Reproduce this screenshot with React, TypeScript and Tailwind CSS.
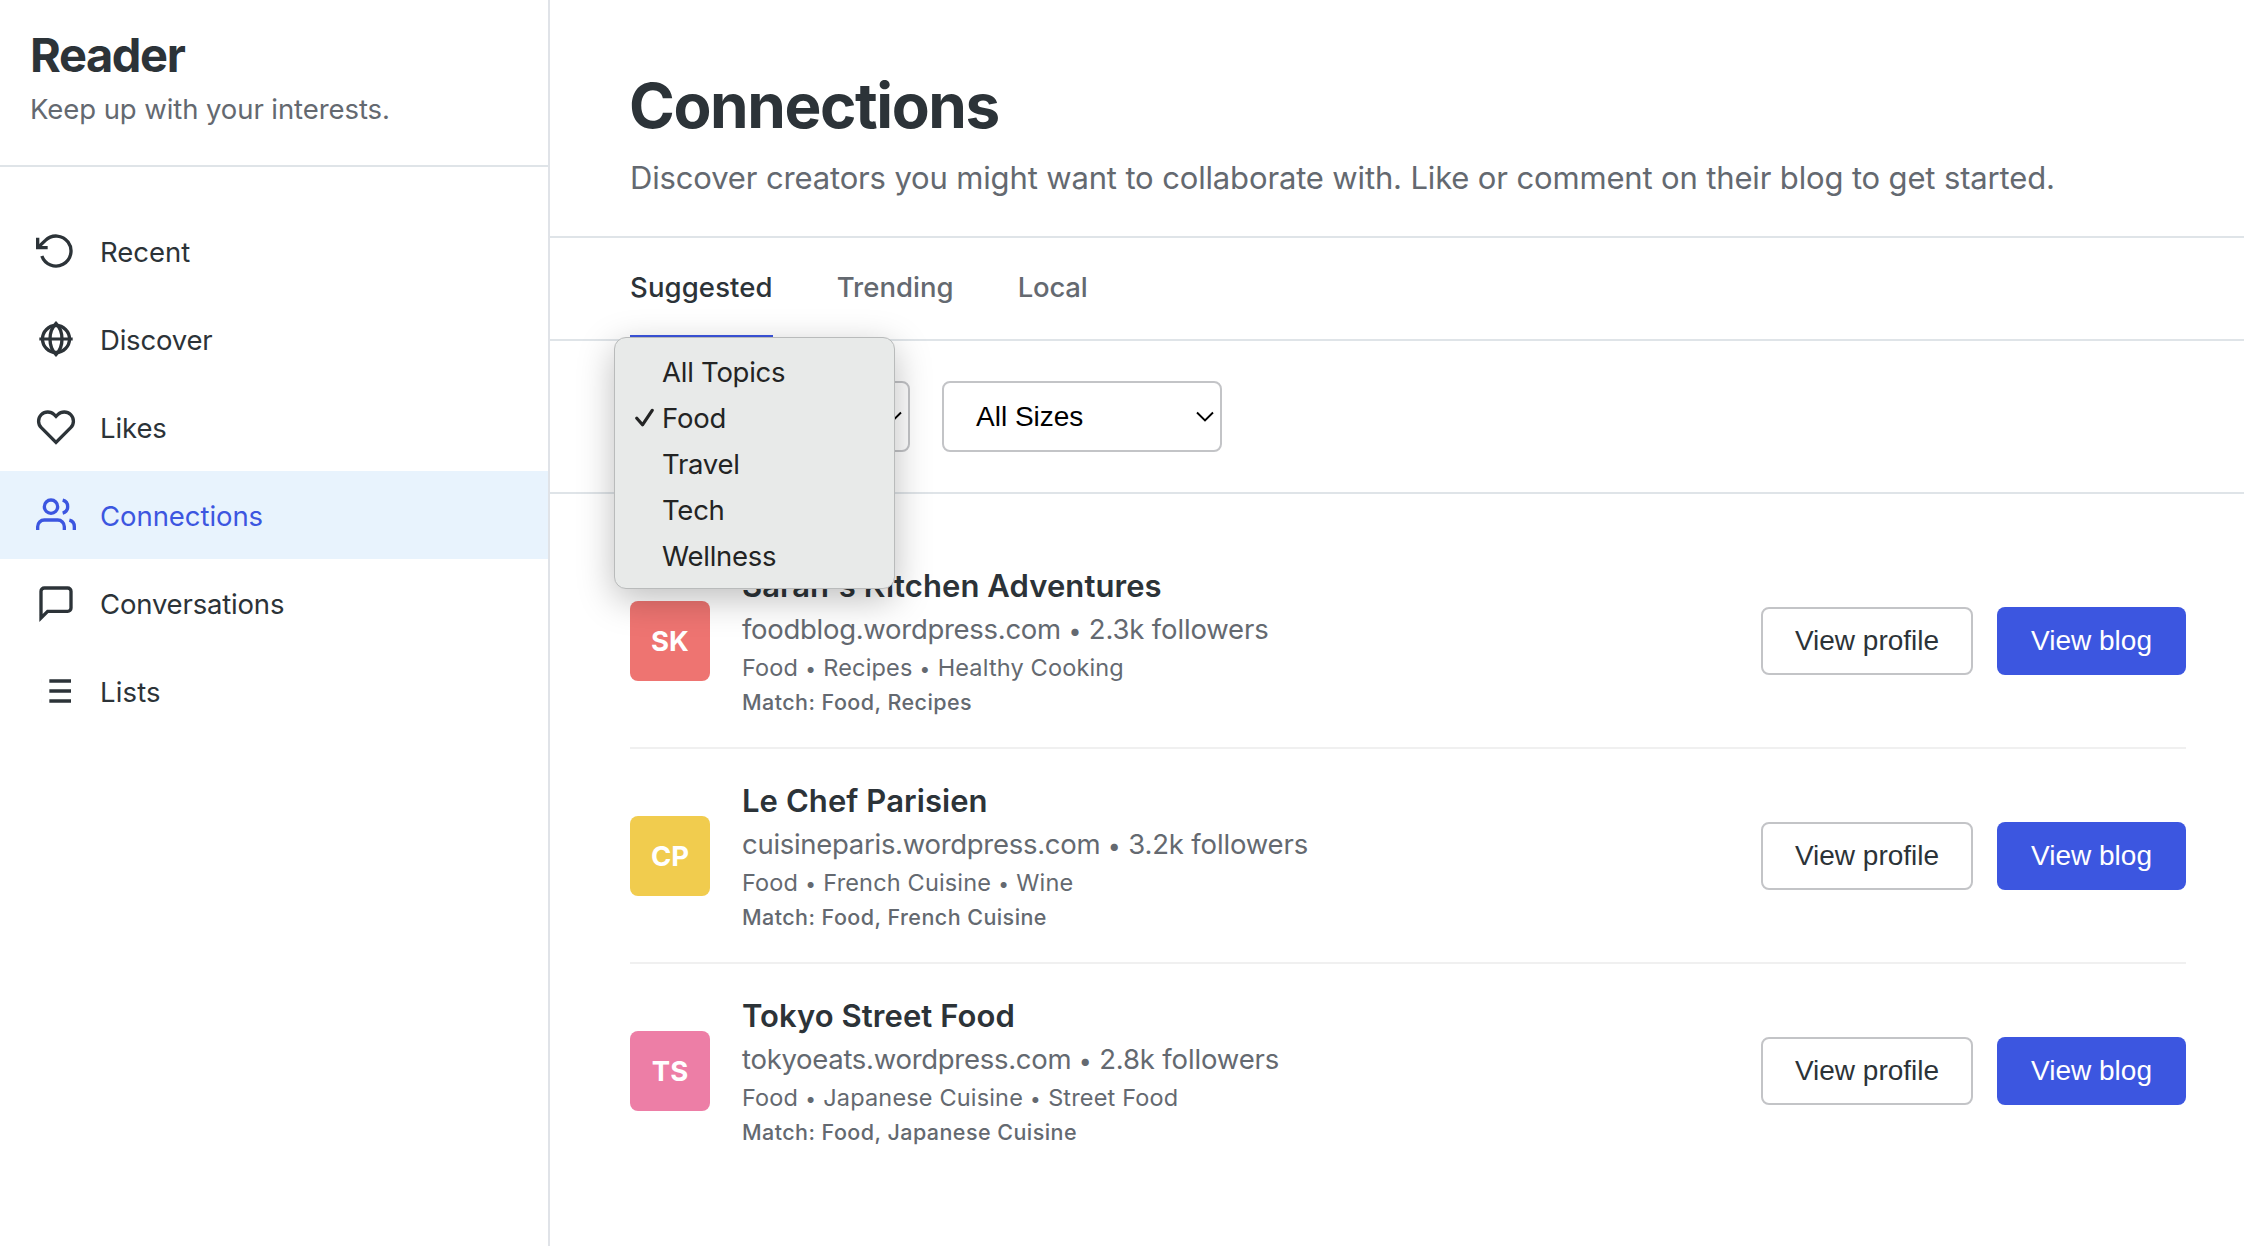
import React from "react";

type IconProps = { children: React.ReactNode };

function Icon({ children }: IconProps) {
  return (
    <svg className="size-10 shrink-0" viewBox="0 0 24 24" fill="none" stroke="currentColor" strokeWidth="2">
      {children}
    </svg>
  );
}

const NAV = [
  {
    label: "Recent",
    tracking: "tracking-normal",
    icon: (
      <>
        <polyline points="1 4 1 10 7 10" />
        <path d="M3.51 15a9 9 0 1 0 2.13-9.36L1 10" />
      </>
    ),
  },
  {
    label: "Discover",
    tracking: "tracking-[-0.2px]",
    icon: (
      <>
        <circle cx="12" cy="12" r="8.1" />
        <path d="M2 12h20" strokeWidth="1.8" />
        <path d="M12 2.6c2.4 2.4 3.6 5.6 3.6 9.4s-1.2 7-3.6 9.4c-2.4-2.4-3.6-5.6-3.6-9.4s1.2-7 3.6-9.4z" />
      </>
    ),
  },
  {
    label: "Likes",
    tracking: "tracking-[-0.1px]",
    icon: (
      <path d="M20.84 4.61a5.5 5.5 0 0 0-7.78 0L12 5.67l-1.06-1.06a5.5 5.5 0 0 0-7.78 7.78l1.06 1.06L12 21.23l7.78-7.78 1.06-1.06a5.5 5.5 0 0 0 0-7.78z" />
    ),
  },
  {
    label: "Connections",
    tracking: "tracking-[-0.06px]",
    active: true,
    icon: (
      <>
        <path d="M17 21v-2a4 4 0 0 0-4-4H5a4 4 0 0 0-4 4v2" />
        <circle cx="9" cy="7" r="4" />
        <path d="M23 21v-2a4 4 0 0 0-3-3.87" />
        <path d="M16 3.13a4 4 0 0 1 0 7.75" />
      </>
    ),
  },
  {
    label: "Conversations",
    tracking: "tracking-[-0.18px]",
    icon: <path d="M21 15a2 2 0 0 1-2 2H7l-4 4V5a2 2 0 0 1 2-2h14a2 2 0 0 1 2 2z" />,
  },
  {
    label: "Lists",
    tracking: "tracking-[0.15px]",
    icon: (
      <>
        <path d="M8 6h13M8 12h13M8 18h13" />
        <path d="M3 6h.01M3 12h.01M3 18h.01" />
      </>
    ),
  },
];

const TABS = [
  { label: "Suggested", className: "border-[#3c56e0] text-[#2c3338] tracking-[0.12px]" },
  { label: "Trending", className: "border-transparent text-[#646970] tracking-[0.03px]" },
  { label: "Local", className: "border-transparent text-[#646970] tracking-[-0.2px]" },
];

const TOPICS = ["All Topics", "Food", "Travel", "Tech", "Wellness"];

const CREATORS = [
  {
    initials: "SK",
    color: "bg-[#ee7471]",
    name: "Sarah's Kitchen Adventures",
    url: "foodblog.wordpress.com",
    followers: "2.3k followers",
    tags: ["Food", "Recipes", "Healthy Cooking"],
    match: "Match: Food, Recipes",
  },
  {
    initials: "CP",
    color: "bg-[#f1cc4e]",
    name: "Le Chef Parisien",
    url: "cuisineparis.wordpress.com",
    followers: "3.2k followers",
    tags: ["Food", "French Cuisine", "Wine"],
    match: "Match: Food, French Cuisine",
  },
  {
    initials: "TS",
    color: "bg-[#ed7ea6]",
    name: "Tokyo Street Food",
    url: "tokyoeats.wordpress.com",
    followers: "2.8k followers",
    tags: ["Food", "Japanese Cuisine", "Street Food"],
    match: "Match: Food, Japanese Cuisine",
  },
];

function Select({ label, children }: { label: string; children?: React.ReactNode }) {
  return (
    <div className="relative flex h-[71px] w-[280px] items-center justify-between rounded-lg border-2 border-[#c3c4c7] bg-white pr-[6px] pl-8 font-['Liberation_Sans',Arial,sans-serif] text-[28px] leading-8 text-black">
      <span>{label}</span>
      <svg className="h-5 w-[18px]" viewBox="0 0 18 20" fill="none" stroke="currentColor" strokeWidth="1.9">
        <path d="M1 5.5 9 13.5l8-8" />
      </svg>
      {children}
    </div>
  );
}

function TopicMenu() {
  return (
    <ul className="absolute top-[-46px] left-[-18px] z-10 h-[252px] w-[281px] rounded-xl border border-[#b9bbbb] bg-[#e8eae9] pt-[11px] font-['Inter',sans-serif] text-[27.5px] tracking-[-0.25px] text-[#232424] shadow-[0_10px_36px_rgba(0,0,0,0.26)]">
      {TOPICS.map((topic) => (
        <li key={topic} className="flex h-[46px] items-center pl-5 leading-[46px]">
          <span className="flex w-[27px] shrink-0">
            {topic === "Food" && (
              <svg
                className="h-5 w-5"
                viewBox="0 0 20 20"
                fill="none"
                stroke="currentColor"
                strokeWidth="3.2"
                strokeLinecap="round"
                strokeLinejoin="round"
              >
                <path d="M1.8 10.3 7.5 16.8 17.2 2.4" />
              </svg>
            )}
          </span>
          {topic}
        </li>
      ))}
    </ul>
  );
}

export default function App() {
  return (
    <div className="flex h-[1246px] w-[2244px] overflow-hidden bg-white font-['Inter',sans-serif] text-[#2c3338]">
      <aside className="w-[550px] shrink-0 border-r-2 border-[#e0e3e8]">
        <div className="h-[167px] border-b-2 border-[#dfe4e8] pt-[27px] pl-[30px]">
          <h1 className="text-[47px] leading-[56px] font-[670] tracking-[-1.4px]">Reader</h1>
          <p className="mt-[6px] text-[27.5px] leading-10 tracking-[-0.08px] text-[#646970]">
            Keep up with your interests.
          </p>
        </div>
        <nav className="mt-10">
          {NAV.map((item) => (
            <a
              key={item.label}
              className={`flex h-[88px] items-center gap-6 pl-9 ${item.active ? "bg-[#e8f3fd] text-[#3c56e0]" : ""}`}
            >
              <Icon>{item.icon}</Icon>
              <span className={`pt-[2px] text-[27.5px] leading-10 ${item.tracking}`}>{item.label}</span>
            </a>
          ))}
        </nav>
      </aside>

      <main className="min-w-0 flex-1">
        <header className="h-[238px] border-b-2 border-[#dfe4e8] pt-[65px] pl-20">
          <h2 className="-ml-px text-[62px] leading-[81px] font-[650] tracking-[-1.42px]">Connections</h2>
          <p className="mt-2 text-[31px] leading-[48px] tracking-[-0.148px] text-[#646970]">
            Discover creators you might want to collaborate with. Like or comment on their blog to get started.
          </p>
        </header>

        <div className="flex h-[103px] gap-16 border-b-2 border-[#dfe4e8] pl-20">
          {TABS.map((tab) => (
            <button
              key={tab.label}
              className={`h-[101px] border-b-4 pt-px text-[27.5px] leading-[96px] font-medium ${tab.className}`}
            >
              {tab.label}
            </button>
          ))}
        </div>

        <div className="flex h-[153px] gap-8 border-b-2 border-[#dfe4e8] pt-10 pl-20">
          <Select label="Food">
            <TopicMenu />
          </Select>
          <Select label="All Sizes" />
        </div>

        <ul className="pt-10 pr-[58px] pl-20">
          {CREATORS.map((c) => (
            <li
              key={c.initials}
              className="flex h-[215px] items-center border-b-2 border-[#f0f0f0] last:h-[213px] last:border-b-0"
            >
              <div
                className={`flex size-20 shrink-0 items-center justify-center rounded-lg text-[27.5px] leading-10 font-bold text-white ${c.color}`}
              >
                {c.initials}
              </div>
              <div className="ml-8 flex-1 self-start pt-8 text-[#646970]">
                <h3 className="text-[31px] leading-10 font-[620] tracking-[0.08px] text-[#2c3338]">{c.name}</h3>
                <p className="mt-[3px] h-10 text-[27.5px] leading-10 tracking-[-0.15px]">
                  <span className="tracking-[-0.29px]">{c.url}</span>{" "}
                  <span className="text-[23px] leading-none">•</span> {c.followers}
                </p>
                <p className="mt-[2px] h-[33px] text-[23.5px] leading-[33px] tracking-[0.16px]">
                  {c.tags.map((tag, i) => (
                    <React.Fragment key={tag}>
                      {i > 0 && (
                        <span className="tracking-[0.4px]">
                          {" "}
                          <span className="text-[19px] leading-none">•</span>{" "}
                        </span>
                      )}
                      {tag}
                    </React.Fragment>
                  ))}
                </p>
                <p className="mt-[2px] text-[21.5px] leading-8 font-medium tracking-[0.44px]">{c.match}</p>
              </div>
              <div className="flex gap-6 font-['Liberation_Sans',Arial,sans-serif] text-[28px]">
                <button className="h-[68px] w-[212px] rounded-lg border-2 border-[#c3c4c7] bg-white">
                  View profile
                </button>
                <button className="h-[68px] w-[189px] rounded-lg bg-[#3c56e0] text-white">View blog</button>
              </div>
            </li>
          ))}
        </ul>
      </main>
    </div>
  );
}
